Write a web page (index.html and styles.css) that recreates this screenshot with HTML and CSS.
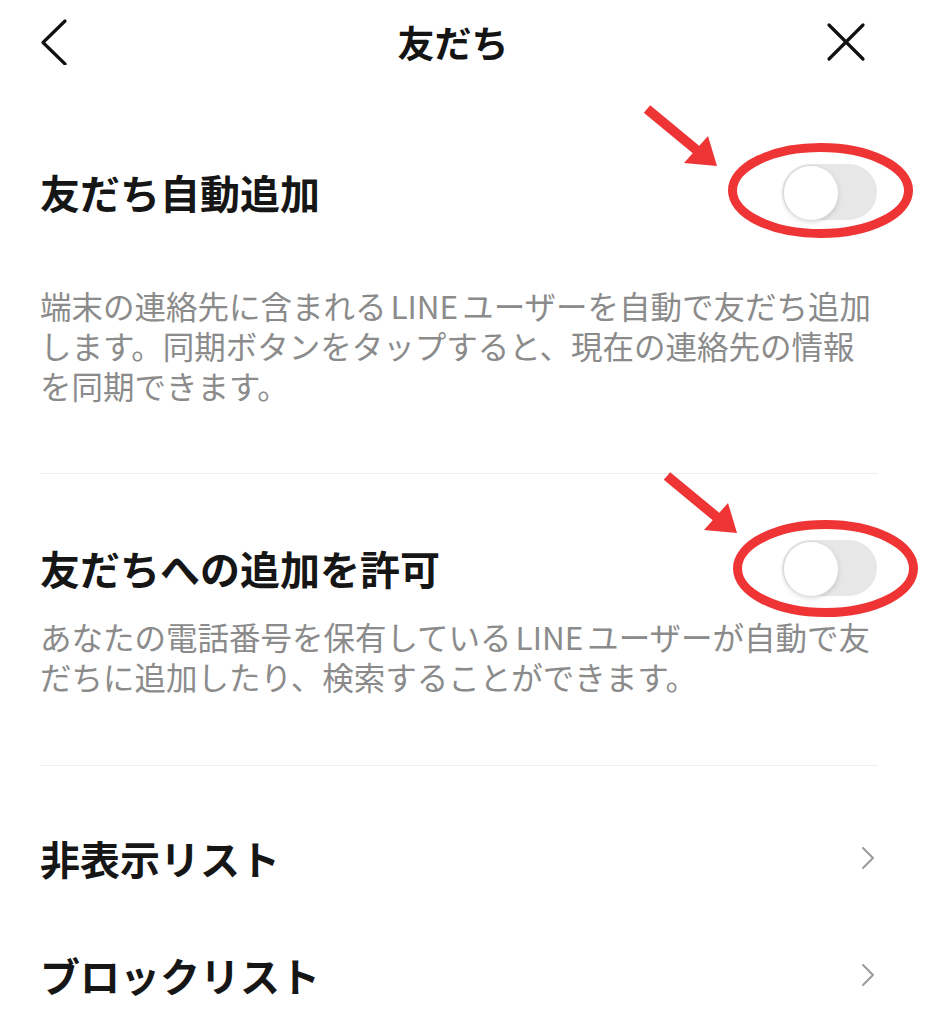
FILE: index.html
```html
<!DOCTYPE html>
<html lang="ja">
<head>
    <meta charset="UTF-8">
    <meta name="viewport" content="width=device-width, initial-scale=1.0">
    <title>友だち</title>
    <link rel="stylesheet" href="styles.css">
</head>
<body>
    <div class="page">
        <div class="screen">
            <header class="navbar">
                <button class="nav-btn nav-back" aria-label="戻る">
                    <svg width="28" height="46" viewBox="0 0 28 46">
                        <path d="M25 2 L3 23.5 L25 45" fill="none" stroke="#111" stroke-width="3.2" stroke-linecap="round" stroke-linejoin="round"/>
                    </svg>
                </button>
                <h1 class="nav-title">友だち</h1>
                <button class="nav-btn nav-close" aria-label="閉じる">
                    <svg width="40" height="40" viewBox="0 0 40 40">
                        <path d="M3 3 L37 37 M37 3 L3 37" fill="none" stroke="#111" stroke-width="3.2" stroke-linecap="round"/>
                    </svg>
                </button>
            </header>

            <main class="settings">
                <!-- 友だち自動追加 -->
                <section class="setting">
                    <div class="setting-row">
                        <span class="setting-title">友だち自動追加</span>
                        <span class="toggle"></span>
                    </div>
                    <p class="setting-desc">端末の連絡先に含まれる<span class="latin">LINE</span>ユーザーを自動で友だち追加<br>します。同期ボタンをタップすると、現在の連絡先の情報<br>を同期できます。</p>
                </section>

                <hr class="divider">

                <!-- 友だちへの追加を許可 -->
                <section class="setting setting-allow">
                    <div class="setting-row">
                        <span class="setting-title">友だちへの追加を許可</span>
                        <span class="toggle"></span>
                    </div>
                    <p class="setting-desc">あなたの電話番号を保有している<span class="latin">LINE</span>ユーザーが自動で友<br>だちに追加したり、検索することができます。</p>
                </section>

                <hr class="divider divider-bottom">

                <ul class="link-list">
                    <li class="link-item">
                        <span class="setting-title">非表示リスト</span>
                        <svg class="chevron" width="16" height="26" viewBox="0 0 16 26">
                            <path d="M3 3 L13 13 L3 23" fill="none" stroke="#9a9a9a" stroke-width="2" stroke-linecap="round" stroke-linejoin="round"/>
                        </svg>
                    </li>
                    <li class="link-item">
                        <span class="setting-title">ブロックリスト</span>
                        <svg class="chevron" width="16" height="26" viewBox="0 0 16 26">
                            <path d="M3 3 L13 13 L3 23" fill="none" stroke="#9a9a9a" stroke-width="2" stroke-linecap="round" stroke-linejoin="round"/>
                        </svg>
                    </li>
                </ul>
            </main>
        </div>

        <!-- red markers drawn over the two switches -->
        <svg class="marks" width="932" height="1024" viewBox="0 0 932 1024">
            <g fill="none" stroke="#ee3434" stroke-width="9">
                <ellipse cx="820.5" cy="190.5" rx="88" ry="43"/>
                <ellipse cx="825.5" cy="568.5" rx="88" ry="44"/>
            </g>
            <g stroke="#ee3434" stroke-width="10">
                <line x1="647" y1="109" x2="699" y2="152"/>
                <line x1="667" y1="476" x2="719" y2="519"/>
            </g>
            <g fill="#ee3434">
                <polygon points="684,163 708,136 717,166"/>
                <polygon points="704,530 728,503 737,533"/>
            </g>
        </svg>
    </div>
</body>
</html>
```

FILE: styles.css
```css
* {
    margin: 0;
    padding: 0;
    box-sizing: border-box;
}

html, body {
    height: 100%;
    overflow: hidden;
}

body {
    font-family: "Noto Sans CJK JP", "Noto Sans", sans-serif;
    background-color: #ffffff;
    color: #161616;
}

.page {
    position: relative;
    width: 932px;
    height: 1024px;
}

.screen {
    width: 912px;
}

/* Top bar */
.navbar {
    height: 84px;
    display: grid;
    grid-template-columns: 1fr auto 1fr;
    align-items: center;
    padding: 0 46px 0 40px;
}

.nav-btn {
    background: none;
    border: none;
    display: flex;
    align-items: center;
}

.nav-back {
    justify-self: start;
}

.nav-close {
    justify-self: end;
}

.nav-title {
    font-size: 37px;
    font-weight: 700;
    line-height: 1;
    color: #141414;
}

/* Settings */
.settings {
    padding-left: 40px;
}

.setting-row {
    display: flex;
    justify-content: space-between;
    align-items: center;
    padding-right: 35px;
    margin-top: 80px;
}

.setting-allow .setting-row {
    margin-top: 66px;
}

.setting-title {
    font-size: 40px;
    font-weight: 700;
    line-height: 1.2;
    color: #161616;
}

.toggle {
    position: relative;
    width: 95px;
    height: 56px;
    border-radius: 28px;
    background-color: #e7e7e7;
}

.toggle::after {
    content: "";
    position: absolute;
    top: 1px;
    left: 1px;
    width: 54px;
    height: 54px;
    border-radius: 50%;
    background-color: #ffffff;
    border: 1px solid #dcdcdc;
    box-shadow: 0 2px 4px rgba(0, 0, 0, 0.12);
}

.setting-desc {
    margin-top: 65px;
    font-size: 31.5px;
    line-height: 40px;
    color: #8b8b8b;
    white-space: nowrap;
}

.setting-allow .setting-desc {
    margin-top: 20px;
}

.latin {
    margin: 0 4px;
}

.divider {
    border: none;
    height: 1px;
    background-color: #efefef;
    margin: 68px 34px 0 0;
}

.divider-bottom {
    margin-top: 69px;
}

/* Link rows */
.link-list {
    list-style: none;
    display: flex;
    flex-direction: column;
    gap: 61px;
    margin-top: 64px;
    padding-right: 36px;
}

.link-item {
    height: 56px;
    display: flex;
    justify-content: space-between;
    align-items: center;
}

/* Annotation layer */
.marks {
    position: absolute;
    top: 0;
    left: 0;
    pointer-events: none;
}
```
